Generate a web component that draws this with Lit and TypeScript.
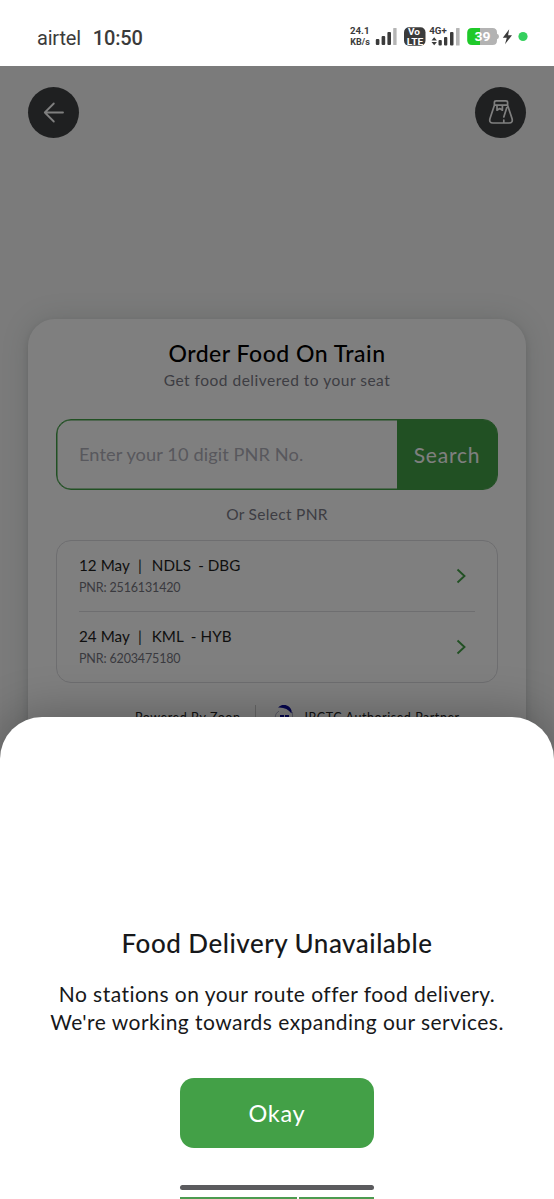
import { LitElement, html, css, svg } from "lit";
import { customElement, property } from "lit/decorators.js";

@customElement("status-bar")
class StatusBar extends LitElement {
  static styles = css`
    :host { display: flex; height: 66px; box-sizing: border-box; padding: 0 25px 0 37px; justify-content: space-between; background: #fff; color: #3b3b3b; font-family: Roboto, sans-serif; }
    .left { display: flex; gap: 12px; padding-top: 26px; font-size: 20px; line-height: 24px; }
    .carrier { letter-spacing: -.2px; }
    .time { font-weight: 500; letter-spacing: -.2px; }
    svg { display: block; }
    text { font-family: Roboto, sans-serif; font-weight: 700; }
  `;
  render() {
    const bars = (x: number) => svg`
      <rect x=${x} y="29" width="3.6" height="6" rx="1"/><rect x=${x + 5.8} y="26" width="3.6" height="9" rx="1"/>
      <rect x=${x + 11.6} y="22" width="3.6" height="13" rx="1"/><rect x=${x + 17.4} y="18" width="3.4" height="17" rx=".6" fill="#b5b5b5"/>`;
    return html`
      <div class="left"><span class="carrier">airtel</span><span class="time">10:50</span></div>
      <svg width="180" height="66" viewBox="349 0 180 66" fill="#3b3b3b">
        <g transform="translate(0 10)">
        <text x="350" y="23.6" font-size="9.8" textLength="19.5" lengthAdjust="spacingAndGlyphs">24.1</text>
        <text x="350.3" y="35.4" font-size="9" textLength="19.5" lengthAdjust="spacingAndGlyphs">KB/s</text>
        ${bars(375.8)}
        <rect x="404" y="17.3" width="21.5" height="18.5" rx="5"/>
        <text x="408" y="25.4" font-size="8.5" fill="#fff" textLength="12" lengthAdjust="spacingAndGlyphs">Vo</text>
        <text x="406.8" y="34.6" font-size="8.5" fill="#fff" textLength="16.5" lengthAdjust="spacingAndGlyphs">LTE</text>
        <text x="429.2" y="23.5" font-size="9.5" textLength="17.5" lengthAdjust="spacingAndGlyphs">4G+</text>
        <path d="M431.500 30.500l2.700-3.200 2.700 3.200zM431.500 32l2.700 3.200 2.700-3.200z"/>
        <rect x="438.5" y="30" width="3.3" height="5.5" rx="1"/><rect x="444" y="27" width="3.3" height="8.5" rx="1"/>
        <rect x="450" y="22" width="3.5" height="13.5" rx="1"/><rect x="456" y="18" width="3.6" height="17.5" rx=".6" fill="#b5b5b5"/>
        <path d="M480 18h12.500q4.500 0 4.500 4.500v1.300q2 .5 2 2.700t-2 2.700v1.300q0 4.500-4.500 4.500H480z" fill="#b3b3b3"/>
        <path d="M480 18h-8q-4.800 0-4.800 4.800v7.400q0 4.800 4.800 4.800h8z" fill="#1fc929"/>
        <text x="474.5" y="31" font-size="13.5" fill="#fff" textLength="16" lengthAdjust="spacingAndGlyphs">39</text>
        <path d="M509.200 19.300l-6.400 8.500h4l-1.800 6.500 7-9h-3.900z"/>
        <circle cx="523" cy="26.5" r="4.6" fill="#35d05e"/>
        </g>
      </svg>`;
  }
}

@customElement("pnr-item")
class PnrItem extends LitElement {
  @property() date = "";
  @property() from = "";
  @property() to = "";
  @property() pnr = "";
  static styles = css`
    :host { display: flex; align-items: center; justify-content: space-between; height: 70px; padding-right: 8px; font-family: Lato, sans-serif; }
    .trip { display: flex; font-size: 15.2px; line-height: 20px; color: #1e1e1e; letter-spacing: .05px; }
    .sep { margin: 0 10px 0 8px; }
    .to { margin-left: 7px; }
    .pnr { font-size: 12.5px; line-height: 18px; margin-top: 4px; color: #75757f; letter-spacing: -.15px; }
    svg { display: block; }
  `;
  render() {
    return html`<div>
        <div class="trip"><span>${this.date}</span><span class="sep">|</span><span>${this.from}</span><span class="to">- ${this.to}</span></div>
        <div class="pnr">PNR: ${this.pnr}</div>
      </div>
      <svg width="12" height="16" viewBox="0 0 12 16" fill="none" stroke="#43a047" stroke-width="1.9"><path d="M2.500 1.500L9.500 8l-7 6.500"/></svg>`;
  }
}

@customElement("app-root")
class AppRoot extends LitElement {
  static styles = css`
    :host { display: block; position: relative; width: 554px; height: 1199px; overflow: hidden; background: #f6f6f6; font-family: Lato, sans-serif; font-variant-ligatures: none; }
    .page { position: relative; height: 1133px; box-sizing: border-box; padding: 21px 28px 0; }
    .scrim { position: absolute; inset: 0; background: rgba(0,0,0,.5); }
    .nav { display: flex; justify-content: space-between; height: 51px; margin-bottom: 181px; }
    .round { display: grid; place-items: center; width: 51px; height: 51px; border-radius: 50%; background: #3f4143; }
    svg { display: block; }
    .card { height: 620px; box-sizing: border-box; padding: 21px 28px 0; border-radius: 27px; background: #fff; box-shadow: 0 0 28px rgba(60,90,80,.16), 0 3px 7px rgba(0,0,0,.12); display: flex; flex-direction: column; text-align: center; white-space: nowrap; }
    .title { font-size: 23px; line-height: 26px; font-weight: 500; color: #000; letter-spacing: .5px; }
    .sub { font-size: 15.5px; line-height: 20px; margin-top: 4px; color: #7a7a86; letter-spacing: .5px; }
    .search { display: flex; height: 71px; box-sizing: border-box; margin-top: 29px; border: 1px solid #43a047; box-shadow: inset 0 0 0 .5px #43a047; border-radius: 15px; overflow: hidden; }
    .field { flex: 1; padding-left: 22px; text-align: left; line-height: 68px; font-size: 18.2px; letter-spacing: .1px; color: #b0b0ba; }
    .go { width: 100px; line-height: 69px; background: #43a047; color: #fff; font-size: 21px; letter-spacing: .8px; }
    .or { font-size: 15.5px; line-height: 20px; margin-top: 14px; color: #7a7a86; letter-spacing: .3px; }
    .list { height: 143px; box-sizing: border-box; margin-top: 16px; padding: 0 22px; border: 1px solid #dcdce0; border-radius: 15px; text-align: left; }
    .rule { height: 1px; background: #dcdce0; }
    .foot { display: flex; align-items: center; height: 26px; margin-top: 21px; padding-left: 79px; font-size: 12.5px; letter-spacing: .55px; color: #222; }
    .bar { width: 1px; height: 24px; margin: 0 18px 0 14px; background: #ccc; }
    .logo { margin-right: 11px; }
    .sheet { position: absolute; left: 0; right: 0; bottom: 0; height: 482px; box-sizing: border-box; padding-top: 210px; display: flex; flex-direction: column; align-items: center; background: #fff; border-radius: 42px 42px 0 0; box-shadow: 0 0 50px rgba(0,0,0,.3); color: #17181a; white-space: nowrap; }
    .head { font-size: 26px; line-height: 32px; font-weight: 500; letter-spacing: .5px; }
    .msg { margin-top: 21px; font-size: 21px; line-height: 28px; text-align: center; letter-spacing: .46px; }
    .ok { width: 194px; height: 70px; margin-top: 42px; line-height: 71px; text-align: center; border-radius: 14px; background: #43a047; color: #fff; font-size: 23.5px; letter-spacing: .7px; }
    .handle { width: 194px; height: 6px; margin-top: 37px; border-radius: 3px; background: #5b5b5e; }
    .under { display: flex; gap: 2px; width: 194px; margin-top: 7px; }
    .under i { height: 2px; background: #4c9b50; flex: 117; }
    .under i + i { flex: 75; }
  `;
  render() {
    return html`
      <status-bar></status-bar>
      <div class="page">
        <div class="nav">
          <div class="round"><svg width="24" height="24" viewBox="0 0 24 24" fill="none" stroke="#fff" stroke-width="1.8" stroke-linecap="round" stroke-linejoin="round"><path d="M11.800 2.500L2.800 11.500l9 9M2.800 11.500h18.200"/></svg></div>
          <div class="round"><svg width="26" height="26" viewBox="0 0 26 26" fill="none" stroke="#fff" stroke-width="1.7" stroke-linejoin="round" stroke-linecap="round"><path d="M8.200 .9h9.600q1.800 0 1.800 1.600V5.200H6.400V2.500q0-1.600 1.800-1.600zM6.400 5.200L2 18.500q-1.200 4.500 3 4.500h16q4.200 0 3-4.500L19.600 5.200M9 5.200v5l2.700-1.600 2.700 1.600v-5M18.800 7.500l-3 9.500M15.800 20v2.500"/></svg></div>
        </div>
        <div class="card">
          <div class="title">Order Food On Train</div>
          <div class="sub">Get food delivered to your seat</div>
          <div class="search"><div class="field">Enter your 10 digit PNR No.</div><div class="go">Search</div></div>
          <div class="or">Or Select PNR</div>
          <div class="list">
            <pnr-item date="12 May" from="NDLS" to="DBG" pnr="2516131420"></pnr-item>
            <div class="rule"></div>
            <pnr-item date="24 May" from="KML" to="HYB" pnr="6203475180"></pnr-item>
          </div>
          <div class="foot"><span>Powered By Zoop</span><span class="bar"></span>
            <svg class="logo" width="20" height="24" viewBox="0 0 20 24"><path d="M4 2.500Q8.500-2 14 1q4.500 3 3.500 7.500Q13 2 4 2.500z" fill="#0c0c9c"/><path d="M5 6Q1 8 1 13M18.500 7v8" stroke="#b4b4cc" fill="none"/><path d="M6 10h4v3H6zM11 10h4v3h-4z" fill="#0c0c9c"/></svg>
            <span>IRCTC Authorised Partner</span></div>
        </div>
        <div class="scrim"></div>
      </div>
      <div class="sheet">
        <div class="head">Food Delivery Unavailable</div>
        <div class="msg">No stations on your route offer food delivery.<br>We're working towards expanding our services.</div>
        <div class="ok">Okay</div>
        <div class="handle"></div>
        <div class="under"><i></i><i></i></div>
      </div>`;
  }
}
